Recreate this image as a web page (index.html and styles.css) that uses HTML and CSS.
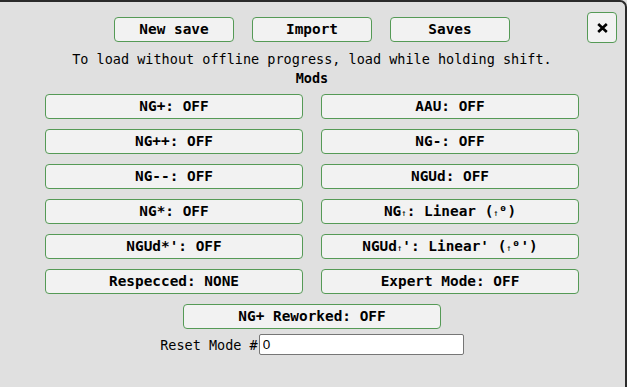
FILE: index.html
```html
<!DOCTYPE html>
<html lang="en">
<head>
    <meta charset="UTF-8">
    <meta name="viewport" content="width=device-width, initial-scale=1.0">
    <title>Saves</title>
    <link rel="stylesheet" href="styles.css">
</head>
<body>
    <div class="modal">
        <button class="btn close" title="Close">
            <svg width="11" height="10" viewBox="0 0 11 10"><path d="M1.2 1 L9.8 9 M9.8 1 L1.2 9" stroke="#000" stroke-width="2.6" stroke-linecap="butt"/></svg>
        </button>

        <div class="top-row">
            <button class="btn top">New save</button>
            <button class="btn top">Import</button>
            <button class="btn top">Saves</button>
        </div>

        <p class="info">To load without offline progress, load while holding shift.</p>
        <p class="mods-title">Mods</p>

        <div class="mods">
            <button class="btn mod">NG+: OFF</button>
            <button class="btn mod">AAU: OFF</button>
            <button class="btn mod">NG++: OFF</button>
            <button class="btn mod">NG-: OFF</button>
            <button class="btn mod">NG--: OFF</button>
            <button class="btn mod">NGUd: OFF</button>
            <button class="btn mod">NG*: OFF</button>
            <button class="btn mod">NG<span class="tiny">↑</span>: Linear (<span class="tiny">↑</span>⁰)</button>
            <button class="btn mod">NGUd*': OFF</button>
            <button class="btn mod">NGUd<span class="tiny">↑</span>': Linear' (<span class="tiny">↑</span>⁰')</button>
            <button class="btn mod">Respecced: NONE</button>
            <button class="btn mod">Expert Mode: OFF</button>
        </div>

        <button class="btn mod wide">NG+ Reworked: OFF</button>

        <div class="reset-row">
            <label for="reset">Reset Mode #</label>
            <input id="reset" type="text" value="0">
        </div>
    </div>
</body>
</html>
```

FILE: styles.css
```css
body {
    margin: 0;
    background: #e0e0e0;
    font-family: 'DejaVu Sans Mono', monospace;
    color: #000;
}

.modal {
    position: relative;
    height: 387px;
    box-sizing: border-box;
    border-top: 2px solid #2b2b2b;
    border-right: 2px solid #2b2b2b;
    border-top-right-radius: 7px;
    padding-top: 15px;
    padding-right: 1px;
    display: flex;
    flex-direction: column;
    align-items: center;
}

.btn {
    font-family: 'DejaVu Sans Mono', monospace;
    font-weight: bold;
    font-size: 14.4px;
    background: #f2f2f2;
    border: 1px solid #559a56;
    border-radius: 4px;
    color: #000;
    padding: 0;
    height: 25px;
    line-height: 23px;
    cursor: pointer;
    white-space: nowrap;
}

.top-row {
    display: flex;
    gap: 18px;
}

.top {
    width: 120px;
}

.close {
    position: absolute;
    top: 10px;
    right: 8px;
    width: 30px;
    height: 31px;
    display: flex;
    align-items: center;
    justify-content: center;
}

.info {
    margin: 9px 0 0;
    font-size: 13.5px;
    line-height: 16px;
}

.mods-title {
    margin: 3px 0 0;
    font-size: 13.5px;
    font-weight: bold;
    line-height: 16px;
}

.mods {
    margin-top: 8px;
    display: grid;
    grid-template-columns: 258px 258px;
    column-gap: 18px;
    row-gap: 10px;
}

.mod {
    width: 258px;
}

.wide {
    margin-top: 10px;
}

.tiny {
    font-size: 9px;
    font-weight: normal;
}

.reset-row {
    margin-top: 5px;
    display: flex;
    align-items: center;
    font-size: 13.5px;
}

.reset-row label {
    margin-right: 1px;
}

.reset-row input {
    width: 205px;
    height: 21px;
    box-sizing: border-box;
    border: 1px solid #767676;
    border-radius: 2px;
    padding: 0 3px;
    font-family: 'Liberation Sans', sans-serif;
    font-size: 13.5px;
    background: #fff;
}
```
